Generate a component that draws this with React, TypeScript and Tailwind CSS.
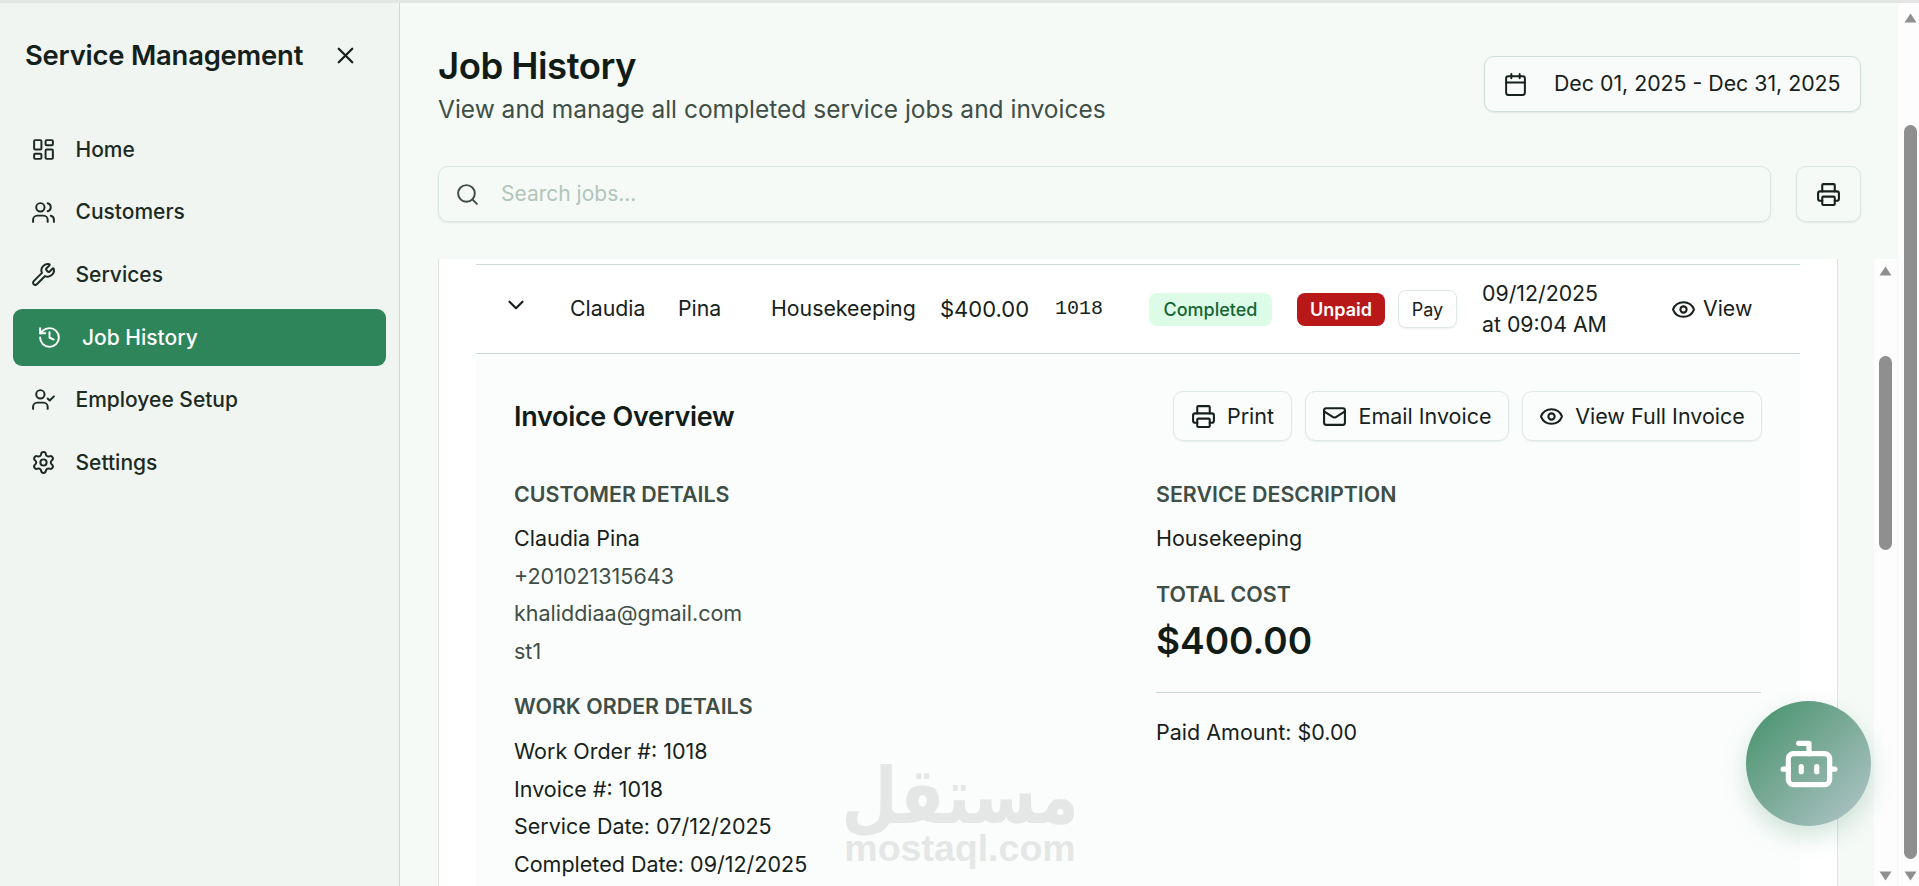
import { LayoutDashboard, Users, Wrench, History, UserCheck, Settings, X, Calendar, Search, Printer, ChevronDown, Eye, Mail, Bot } from "lucide-react";

const nav = [
  { label: "Home", icon: LayoutDashboard },
  { label: "Customers", icon: Users },
  { label: "Services", icon: Wrench },
  { label: "Job History", icon: History, active: true },
  { label: "Employee Setup", icon: UserCheck },
  { label: "Settings", icon: Settings },
];

function Up() {
  return <svg width="13" height="10" viewBox="0 0 13 10" className="fill-[#8f8f8f]"><path d="M6.5 0.5 L12.5 9.5 L0.5 9.5 Z" /></svg>;
}
function Down() {
  return <svg width="13" height="10" viewBox="0 0 13 10" className="fill-[#8f8f8f]"><path d="M0.5 0.5 L12.5 0.5 L6.5 9.5 Z" /></svg>;
}

function Action({ icon: Icon, label, w }: { icon: typeof Eye; label: string; w: string }) {
  return (
    <button className={`flex h-[50px] items-center justify-center gap-[11px] rounded-[10px] border border-[#dfe9e3] bg-[#fbfdfc] text-[21.5px] text-[#16211b] shadow-[0_1px_2px_rgba(0,0,0,0.06)] ${w}`}>
      <Icon size={25} strokeWidth={2} />
      {label}
    </button>
  );
}

const label = "text-[21.4px] leading-[32px] font-semibold text-[#3f4e46]";
const body = "text-[21.5px] leading-[37.5px]";

export default function App() {
  return (
    <div className="relative flex h-[886px] w-[1919px] flex-col overflow-hidden bg-white font-['Inter',sans-serif] text-[#16211b]">
      <div className="h-[3px] shrink-0 bg-[#e4e6e4]" />
      <div className="flex min-h-0 flex-1">
        <aside className="flex w-[400px] shrink-0 flex-col border-r border-[#c9dad1] bg-[#f0f5f2]">
          <div className="flex h-[106px] items-center pl-[25px]">
            <span className="w-[307px] -mt-[1px] text-[27.4px] font-semibold tracking-[-0.2px] text-[#14201a]">Service Management</span>
            <X size={27} strokeWidth={2} className="-mt-[1px]" />
          </div>
          <nav className="flex flex-col gap-[5.6px] px-[13px] pt-[12px]">
            {nav.map(({ label, icon: Icon, active }) => (
              <div
                key={label}
                className={
                  active
                    ? "flex h-[57px] items-center gap-[20px] rounded-[9px] bg-[#2e8559] pl-[24px] text-[21px] font-medium text-white"
                    : "flex h-[57px] items-center gap-[19.5px] pl-[18px] text-[21px] font-medium text-[#1b2a22]"
                }
              >
                <Icon size={25} strokeWidth={1.9} />
                {label}
              </div>
            ))}
          </nav>
        </aside>

        <main className="flex min-w-0 flex-1 flex-col bg-[#f6faf7]">
          <div className="flex h-[163px] shrink-0 flex-col pl-[38px] pr-[37px]">
            <div className="flex items-start justify-between pt-[38px]">
              <div>
                <h1 className="text-[36.5px] leading-[50px] font-semibold tracking-[-0.5px] text-[#121c16]">Job History</h1>
                <p className="pt-[1px] text-[24.5px] leading-[34px] text-[#3f4e46]">View and manage all completed service jobs and invoices</p>
              </div>
              <button className="mt-[15px] flex h-[56px] w-[377px] items-center gap-[26px] rounded-[10px] border border-[#cfe0d6] bg-[#f8fbf9] pl-[18px] text-[21.3px] shadow-[0_1px_2px_rgba(0,0,0,0.08)]">
                <Calendar size={25} strokeWidth={1.9} />
                Dec 01, 2025 - Dec 31, 2025
              </button>
            </div>
          </div>
          <div className="flex h-[93px] shrink-0 items-start gap-[25px] pl-[38px] pr-[37px]">
            <div className="flex h-[56px] flex-1 items-center gap-[21px] rounded-[10px] border border-[#dbe8e0] bg-[#f6faf7] pl-[16px] shadow-[0_1px_2px_rgba(0,0,0,0.08)]">
              <Search size={25} strokeWidth={1.9} className="text-[#3f4e46]" />
              <span className="text-[21px] text-[#b1c5ba]">Search jobs...</span>
            </div>
            <button className="flex h-[56px] w-[65px] items-center justify-center rounded-[10px] border border-[#dbe8e0] bg-[#f6faf7] shadow-[0_1px_2px_rgba(0,0,0,0.08)]">
              <Printer size={25} strokeWidth={2} />
            </button>
          </div>

          <div className="flex min-h-0 flex-1 pl-[38px]">
            <div className="h-full w-[1400px] overflow-hidden border-x border-[#d9e5de] bg-white px-[37px] pt-[5px]">
              <div className="grid h-[90px] grid-cols-[94px_108px_93px_169px_115px_94px_148px_185px_190px_127px] items-center border-y border-[#c9dad1] text-[21.3px] text-[#16211b]">
                <ChevronDown size={26} strokeWidth={2} className="mb-[8px] ml-[27px]" />
                <span>Claudia</span>
                <span>Pina</span>
                <span>Housekeeping</span>
                <span className="text-[22px]">$400.00</span>
                <span className="font-['Liberation_Mono',monospace] text-[20px]">1018</span>
                <span className="flex h-[33px] w-[123px] items-center justify-center rounded-[8px] bg-[#dcfce7] text-[18px] font-medium text-[#166534]">Completed</span>
                <div className="flex items-center gap-[13px]">
                  <span className="flex h-[33px] w-[88px] items-center justify-center rounded-[8px] bg-[#b91818] text-[18px] font-semibold text-white">Unpaid</span>
                  <span className="flex h-[38px] w-[59px] items-center justify-center rounded-[8px] border border-[#e0e8e3] bg-white text-[18px] shadow-[0_1px_2px_rgba(0,0,0,0.06)]">Pay</span>
                </div>
                <span className="leading-[31px] whitespace-nowrap">09/12/2025<br />at 09:04 AM</span>
                <span className="-ml-[1px] flex items-center gap-[7px]"><Eye size={25} strokeWidth={2} />View</span>
              </div>
              <div className="h-full bg-[#fbfdfc] px-[38px] pt-[37px]">
                <div className="flex items-center justify-between">
                  <h2 className="pt-[3px] text-[27px] font-semibold tracking-[-0.3px] text-[#121c16]">Invoice Overview</h2>
                  <div className="flex gap-[13px]">
                    <Action icon={Printer} label="Print" w="w-[119px]" />
                    <Action icon={Mail} label="Email Invoice" w="w-[204px]" />
                    <Action icon={Eye} label="View Full Invoice" w="w-[240px]" />
                  </div>
                </div>
                <div className="mt-[37px] grid grid-cols-[642px_605px]">
                  <div>
                    <h3 className={label}>CUSTOMER DETAILS</h3>
                    <p className={`mt-[10px] ${body}`}>Claudia Pina</p>
                    <p className={`${body} text-[#3f4e46]`}>+201021315643</p>
                    <p className={`${body} text-[#3f4e46]`}>khaliddiaa@gmail.com</p>
                    <p className={`${body} text-[#3f4e46]`}>st1</p>
                    <h3 className={`mt-[20px] ${label}`}>WORK ORDER DETAILS</h3>
                    <p className={`mt-[11px] ${body}`}>Work Order #: 1018</p>
                    <p className={body}>Invoice #: 1018</p>
                    <p className={body}>Service Date: 07/12/2025</p>
                    <p className={body}>Completed Date: 09/12/2025</p>
                  </div>
                  <div>
                    <h3 className={label}>SERVICE DESCRIPTION</h3>
                    <p className={`mt-[10px] ${body}`}>Housekeeping</p>
                    <h3 className={`mt-[20px] ${label}`}>TOTAL COST</h3>
                    <p className="mt-[6px] text-[37px] leading-[50px] font-semibold text-[#121c16]">$400.00</p>
                    <div className="mt-[26px] border-t border-[#c9dad1]" />
                    <p className="mt-[21px] text-[21.5px] leading-[37.5px]">Paid Amount: $0.00</p>
                  </div>
                </div>
              </div>
            </div>
            <div className="ml-[36px] flex h-full w-[23px] flex-col items-center bg-[#fdfdfd] pt-[7px]">
              <Up />
              <div className="mt-[80px] h-[194px] w-[13px] rounded-full bg-[#8f8f8f]" />
              <div className="mt-auto mb-[5px]"><Down /></div>
            </div>
          </div>
        </main>

        <div className="flex w-[21px] shrink-0 flex-col items-center bg-[#fdfdfd] pl-[3px] pt-[10px]">
          <Up />
          <div className="mt-[102px] h-[734px] w-[13px] rounded-full bg-[#8f8f8f]" />
          <div className="mt-auto mb-[5px]"><Down /></div>
        </div>
      </div>

      <button className="absolute left-[1746px] top-[701px] flex h-[125px] w-[125px] items-center justify-center rounded-full bg-gradient-to-br from-[#3f9069] to-[#b3c6cb] shadow-[0_10px_24px_rgba(46,133,89,0.22)]">
        <Bot size={62} strokeWidth={2} className="text-white" />
      </button>

      <div className="pointer-events-none absolute left-[840px] top-[771px] flex w-[240px] flex-col items-center text-[#e5e7e7]">
        <span className="inline-block scale-y-[1.2] font-['DejaVu_Sans',sans-serif] text-[65px] leading-[52px] font-bold">مستقل</span>
        <span className="mt-[6px] font-['Liberation_Sans',sans-serif] text-[37.5px] leading-[38px] font-bold">mostaql.com</span>
      </div>
    </div>
  );
}
